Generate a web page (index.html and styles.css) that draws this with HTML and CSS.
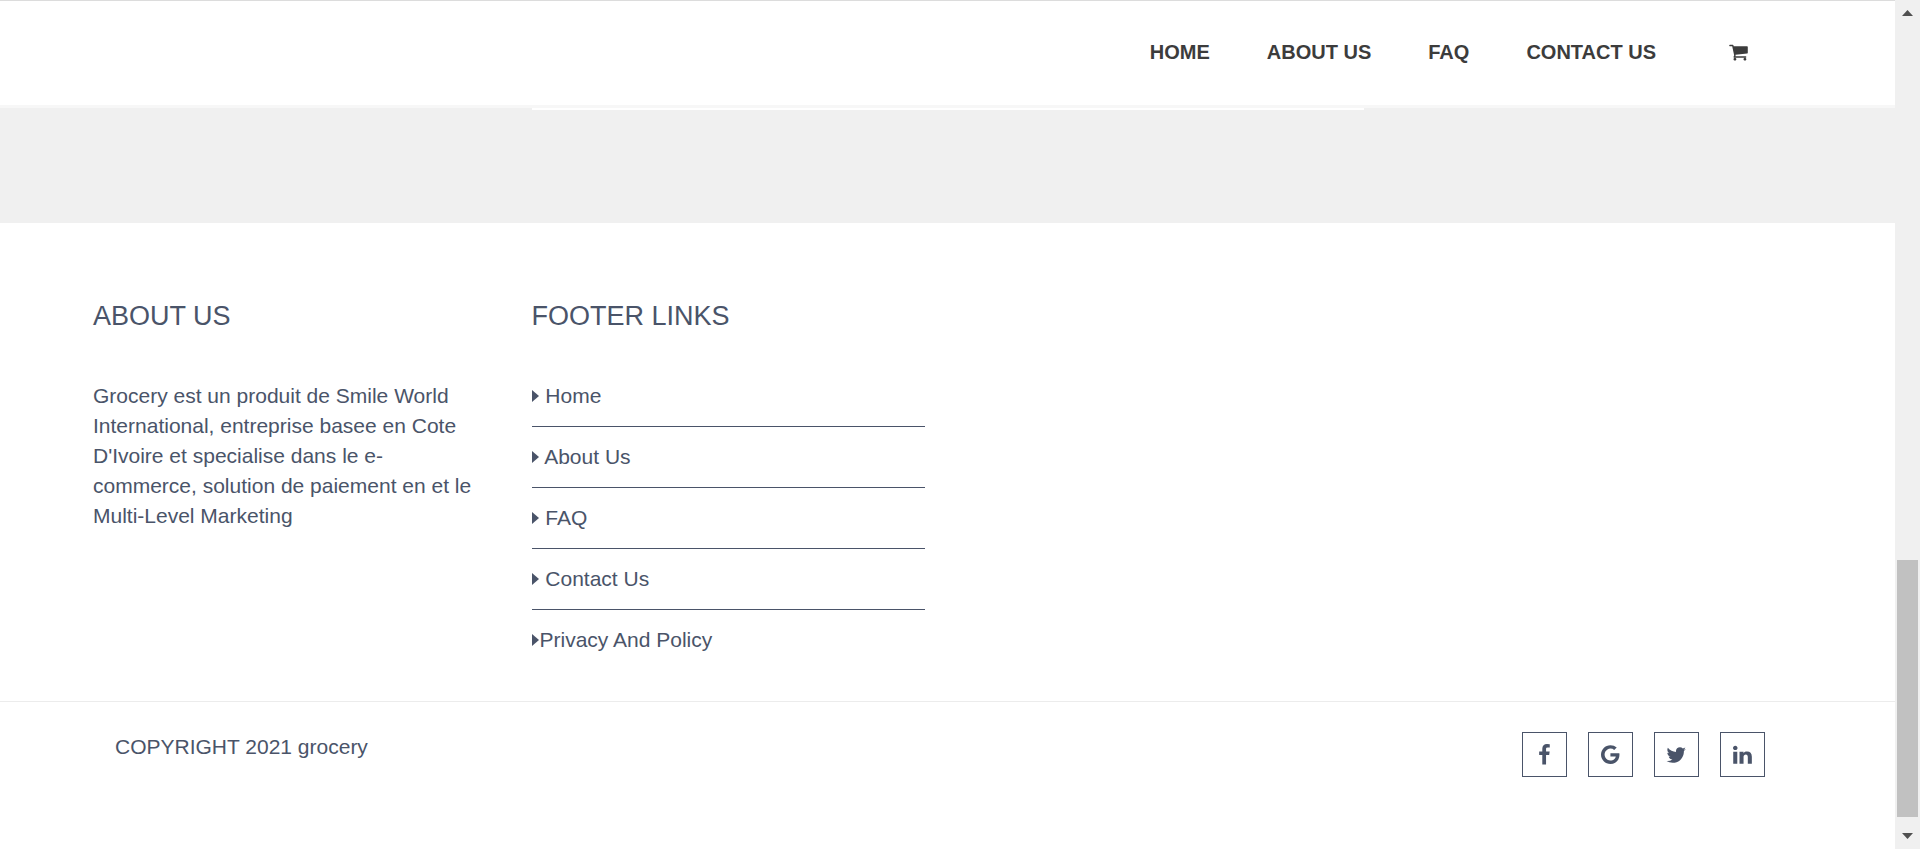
FILE: index.html
```html
<!DOCTYPE html>
<html lang="en">
<head>
<meta charset="utf-8">
<title>Grocery</title>
<meta name="viewport" content="width=device-width, initial-scale=1">
<link rel="stylesheet" href="styles.css">
</head>
<body>
<div class="page">
  <header class="header">
    <nav class="nav" aria-label="Main">
      <a href="#">HOME</a>
      <a href="#">ABOUT US</a>
      <a href="#">FAQ</a>
      <a href="#">CONTACT US</a>
      <a href="#" class="cart" aria-label="Cart">
        <svg viewBox="0 0 1664 1792" aria-hidden="true"><path d="M640 1536q0 52-38 90t-90 38-90-38-38-90 38-90 90-38 90 38 38 90zm896 0q0 52-38 90t-90 38-90-38-38-90 38-90 90-38 90 38 38 90zm128-1088v512q0 24-16.500 42.500t-40.500 21.500l-1044 122q13 60 13 70 0 16-24 64h920q26 0 45 19t19 45-19 45-45 19h-1024q-26 0-45-19t-19-45q0-11 8-31.500t16-36 21.500-40 15.500-29.500l-177-823h-204q-26 0-45-19t-19-45 19-45 45-19h256q16 0 28.500 6.500t19.500 15.500 13 24.500 8 26 5.500 29.500 4.500 26h1201q26 0 45 19t19 45z"/></svg>
      </a>
    </nav>
  </header>

  <main class="band">
    <div class="columns"><div class="panel"></div></div>
  </main>

  <footer class="footer">
    <div class="columns footer-top">
      <section>
        <h2>ABOUT US</h2>
        <p>Grocery est un produit de Smile World International, entreprise basee en Cote D'Ivoire et specialise dans le e-commerce, solution de paiement en et le Multi-Level Marketing</p>
      </section>
      <section>
        <h2>FOOTER LINKS</h2>
        <ul class="links">
          <li><a href="#"><span class="caret"></span> Home</a></li>
          <li><a href="#"><span class="caret"></span> About Us</a></li>
          <li><a href="#"><span class="caret"></span> FAQ</a></li>
          <li><a href="#"><span class="caret"></span> Contact Us</a></li>
          <li><a href="#"><span class="caret"></span>Privacy And Policy</a></li>
        </ul>
      </section>
    </div>
    <div class="footer-bottom">
      <p>COPYRIGHT 2021 grocery</p>
      <div class="social">
        <a href="#" aria-label="Facebook"><svg viewBox="0 0 1024 1792" aria-hidden="true"><path d="M959 12v264h-157q-86 0-116 36t-30 108v189h293l-39 296h-254v759h-306v-759h-255v-296h255v-218q0-186 104-288.500t277-102.500q147 0 228 12z"/></svg></a>
        <a href="#" aria-label="Google"><svg viewBox="0 0 1536 1792" aria-hidden="true"><path d="M768 750h725q12 67 12 128 0 217-91 387.500t-259.500 266.500-386.500 96q-157 0-299-60.500t-245-163.500-163.500-245-60.500-299 60.500-299 163.500-245 245-163.500 299-60.500q300 0 515 201l-209 201q-123-119-306-119-129 0-238.500 65t-173.500 176.500-64 243.500 64 243.500 173.500 176.500 238.500 65q87 0 160-24t120-60 82-82 51.500-87 22.500-78h-436v-264z"/></svg></a>
        <a href="#" aria-label="Twitter"><svg viewBox="0 0 1664 1792" aria-hidden="true"><path d="M1620 408q-67 98-162 167 1 14 1 42 0 130-38 259.500t-115.500 248.500-184.500 210.500-258 146-323 54.500q-271 0-496-145 35 4 78 4 225 0 401-138-105-2-188-64.500t-114-159.500q33 5 61 5 43 0 85-11-112-23-185.500-111.500t-73.500-205.500v-4q68 38 146 41-66-44-105-115t-39-154q0-88 44-163 121 149 294.500 238.500t371.500 99.500q-8-38-8-74 0-134 94.500-228.500t228.500-94.500q140 0 236 102 109-21 205-78-37 115-142 178 93-10 186-50z"/></svg></a>
        <a href="#" aria-label="LinkedIn"><svg viewBox="0 0 1536 1792" aria-hidden="true"><path d="M349 625v991h-330v-991h330zm21-306q1 73-50.500 122t-135.500 49h-2q-82 0-132-49t-50-122q0-74 51.500-122.500t134.500-48.500 133 48.500 51 122.500zm1166 729v568h-329v-530q0-105-40.500-164.500t-126.500-59.500q-63 0-105.500 34.500t-63.500 85.500q-11 30-11 81v553h-329q2-399 2-647t-1-296l-1-48h329v144h-2q20-32 41-56t56.500-52 87-43.500 114.500-15.500q171 0 275 113.500t104 332.500z"/></svg></a>
      </div>
    </div>
  </footer>
</div>

<div class="scrollbar">
  <button type="button" aria-label="Scroll up"><svg viewBox="0 0 11 6" aria-hidden="true"><path d="M0 6L5.500 0L11 6z"/></svg></button>
  <div class="track"><div class="thumb"></div></div>
  <button type="button" aria-label="Scroll down"><svg viewBox="0 0 11 6" aria-hidden="true"><path d="M0 0L5.500 6L11 0z"/></svg></button>
</div>
</body>
</html>
```
FILE: styles.css
```css
* { box-sizing: border-box; }

body {
  margin: 0;
  min-height: 100vh;
  display: flex;
  background: #fff;
  color: #4a5469;
  font-family: "Liberation Sans", Arial, sans-serif;
  font-size: 21px;
  line-height: 30px;
}

a { color: inherit; text-decoration: none; }
p, h2, ul { margin: 0; padding: 0; }
svg { display: block; fill: currentColor; }

.page {
  flex: 1;
  min-width: 0;
  display: flex;
  flex-direction: column;
}

.header {
  border-top: 1px solid #dcdcdc;
  border-bottom: 3px solid #f7f7f7;
}

.nav {
  display: flex;
  justify-content: flex-end;
  align-items: center;
  gap: 57px;
  padding: 36px 147px 38px 93px;
  color: #3c3c3c;
  font-size: 20px;
  font-weight: 700;
}

.cart { margin-left: 16px; }
.cart svg { width: 19px; height: 20px; }

.columns {
  display: grid;
  grid-template-columns: repeat(4, 1fr);
  column-gap: 45px;
  padding: 0 93px;
}

.band {
  height: 115px;
  background: #f0f0f0;
}

.panel {
  grid-column: 2 / span 2;
  height: 2px;
  background: #fff;
}

.footer { flex: 1; }

.footer-top {
  padding-top: 78px;
  padding-bottom: 46px;
  border-bottom: 1px solid #ececec;
}

.footer h2 {
  margin-bottom: 50px;
  font-size: 27px;
  font-weight: 400;
}

.links { list-style: none; }
.links li + li {
  margin-top: 15px;
  padding-top: 15px;
  border-top: 1px solid #4a5469;
}

.caret {
  display: inline-block;
  margin-right: 1px;
  border: 6px solid transparent;
  border-left: 7px solid #4a5469;
  border-right: 0;
  vertical-align: 1px;
}

.footer-bottom {
  display: flex;
  justify-content: space-between;
  padding: 30px 130px 30px 115px;
}

.social { display: flex; gap: 21px; }
.social a {
  display: flex;
  align-items: center;
  justify-content: center;
  width: 45px;
  height: 45px;
  border: 1px solid #4a5469;
}
.social svg { height: 22px; }

.scrollbar {
  display: flex;
  flex-direction: column;
  width: 25px;
  padding-bottom: 1px;
  background: #f0f0f0;
}

.scrollbar button {
  display: flex;
  align-items: center;
  justify-content: center;
  height: 25px;
  padding: 0;
  border: 0;
  background: none;
  color: #505050;
}
.scrollbar button svg { width: 11px; height: 6px; }

.track {
  flex: 1;
  display: flex;
  flex-direction: column;
  justify-content: flex-end;
  padding: 0 2px 6px;
}
.thumb {
  height: 32.500%;
  background: #c1c1c1;
}
```
